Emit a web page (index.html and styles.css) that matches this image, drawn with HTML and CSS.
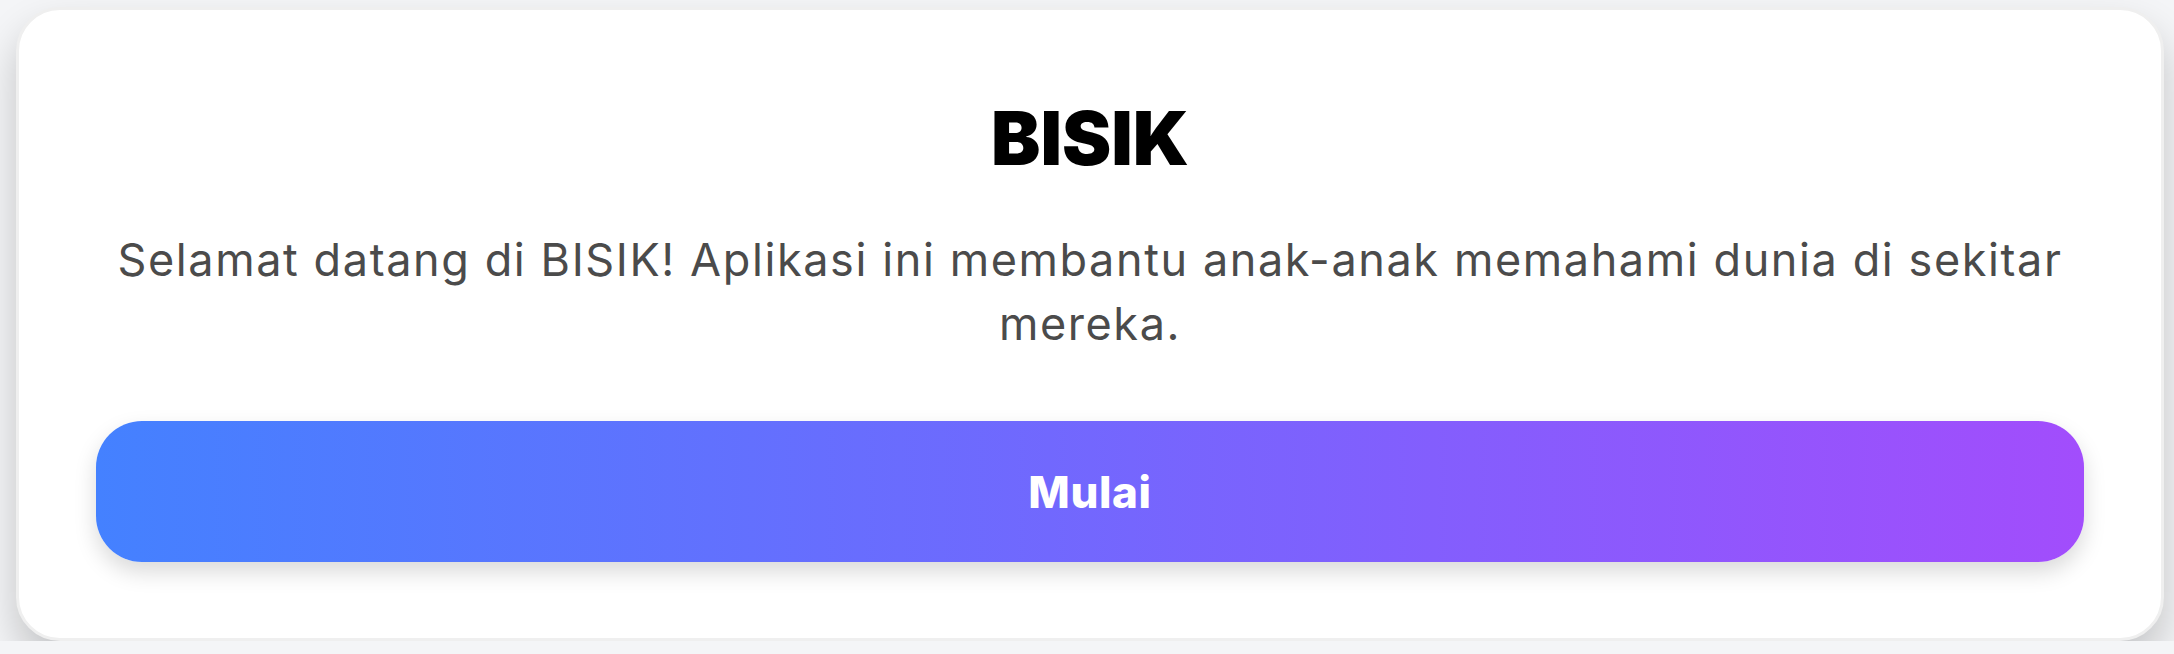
FILE: index.html
```html
<!DOCTYPE html>
<html lang="id">
<head>
  <meta charset="UTF-8" />
  <meta name="viewport" content="width=device-width, initial-scale=1.0"/>
  <title>BISIK</title>
  <link rel="stylesheet" href="styles.css">
</head>
<body>

  <div class="card">
    <h1 class="title">BISIK</h1>
    <p class="intro">Selamat datang di BISIK! Aplikasi ini membantu anak-anak memahami dunia di sekitar mereka.</p>
    <button type="button" class="btn">Mulai</button>
  </div>

</body>
</html>
```

FILE: styles.css
```css
* { box-sizing: border-box; }

body {
  margin: 0;
  font-family: Inter, 'Noto Sans', sans-serif;
  background: #f4f5f7;
  color: #333;
  overflow: hidden;
}

.card {
  margin: 7px 10px 0 16px;
  background: white;
  border: 3px solid #efefef;
  border-radius: 44px;
  padding: 91px 77px 76px;
  box-shadow: 0 22px 40px rgba(0, 0, 0, 0.2);
  display: flex;
  flex-direction: column;
  align-items: center;
}

.title {
  margin: 0;
  font-size: 74px;
  line-height: 1;
  font-weight: 900;
  color: #000;
  letter-spacing: 0;
}

.intro {
  margin: 53px 0 0;
  font-size: 45px;
  line-height: 64px;
  color: #4b4b4b;
  text-align: center;
  letter-spacing: 1.6px;
}

.btn {
  margin-top: 65px;
  width: 100%;
  height: 141px;
  border: none;
  border-radius: 46px;
  background: linear-gradient(90deg, #4481ff, #a24dfc);
  color: white;
  font-family: inherit;
  font-size: 44px;
  font-weight: 800;
  line-height: 1;
  letter-spacing: 0.6px;
  cursor: pointer;
  box-shadow: 0 10px 22px rgba(0, 0, 0, 0.15);
}
```
